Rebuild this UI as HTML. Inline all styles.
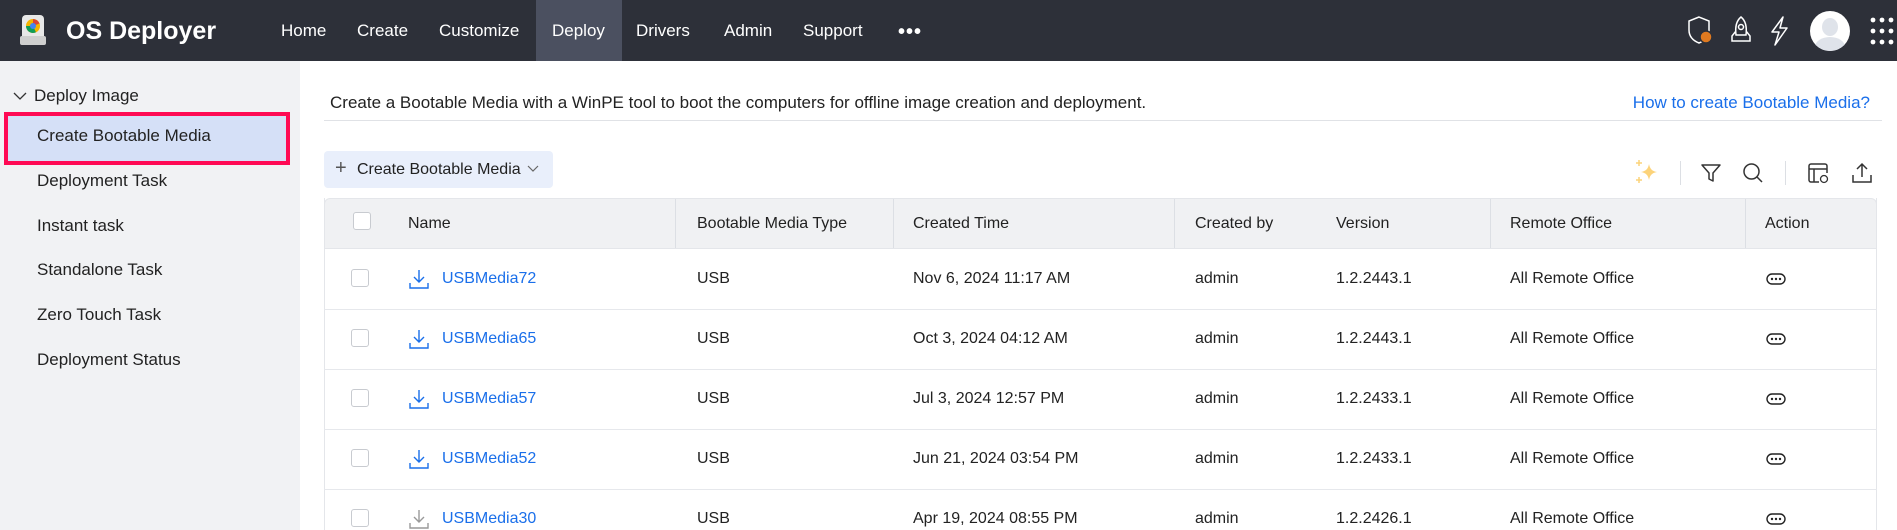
<!DOCTYPE html>
<html><head><meta charset="utf-8"><style>
*{margin:0;padding:0;box-sizing:border-box}
body{width:1897px;height:530px;overflow:hidden;background:#fff;font-family:"Liberation Sans",sans-serif;color:#222;position:relative}
.a{position:absolute;white-space:nowrap}
.nav{position:absolute;left:0;top:0;width:1897px;height:61px;background:#2d3039}
.ni{position:absolute;top:0;height:61px;line-height:61px;color:#fff;font-size:17px}
.side{position:absolute;left:0;top:61px;width:300px;height:469px;background:#f1f2f4}
.si{position:absolute;left:37px;font-size:17px;color:#222;transform:translateY(-50%)}
.hdr{position:absolute;left:324px;top:198px;width:1553px;height:51px;background:#f0f1f3;border:1px solid #e4e6ea;border-radius:6px 6px 0 0}
.c{position:absolute;font-size:16px;transform:translateY(-50%);white-space:nowrap}
.cb{position:absolute;width:18px;height:18px;border:1.5px solid #c8cbd0;border-radius:3px;background:#fff}
.row{position:absolute;left:324px;width:1553px;height:1px;background:#e6e8ec}
.dv{position:absolute;top:199px;width:1px;height:49px;background:#dcdfe4}
a{color:#1a6fea;text-decoration:none}
</style></head><body>
<div class="nav"></div>
<svg class="a" style="left:19px;top:14px" width="28" height="32" viewBox="0 0 28 32"><rect x="3" y="1" width="22" height="26" rx="4" fill="#e8e8e8"/><rect x="1" y="22" width="26" height="9" rx="2" fill="#cfcfcf"/><circle cx="14" cy="12" r="7" fill="#f4b400"/><path d="M14 5a7 7 0 0 1 6.5 4.5L14 12z" fill="#db4437"/><path d="M7 12a7 7 0 0 0 10 6.3L14 12z" fill="#0f9d58"/><circle cx="14" cy="12" r="3" fill="#4285f4"/></svg>
<div class="a" style="left:66px;top:17px;font-size:25px;font-weight:bold;color:#fff">OS Deployer</div>
<div class="ni" style="left:281px">Home</div>
<div class="ni" style="left:357px">Create</div>
<div class="ni" style="left:439px">Customize</div>
<div class="a" style="left:536px;top:0;width:86px;height:61px;background:#4b5060"></div>
<div class="ni" style="left:552px">Deploy</div>
<div class="ni" style="left:636px">Drivers</div>
<div class="ni" style="left:724px">Admin</div>
<div class="ni" style="left:803px">Support</div>
<div class="ni" style="left:898px;top:2px;font-size:20px;letter-spacing:1px;font-weight:bold">•••</div>
<svg class="a" style="left:1685px;top:15px" width="32" height="32" viewBox="0 0 32 32"><path d="M14 2L4 6v9c0 7 5 11 10 13 5-2 10-6 10-13V6z" fill="none" stroke="#fff" stroke-width="1.5"/><circle cx="21" cy="22" r="6" fill="#e07a20" stroke="#2d3039" stroke-width="1.5"/></svg>
<svg class="a" style="left:1728px;top:15px" width="26" height="32" viewBox="0 0 26 32"><path d="M13 2c5 4 6 10 5 18H8C7 12 8 6 13 2z" fill="none" stroke="#fff" stroke-width="1.5"/><circle cx="13" cy="12" r="2.5" fill="none" stroke="#fff" stroke-width="1.5"/><path d="M8 16l-4 5v5h4M18 16l4 5v5h-4M8 26h10" fill="none" stroke="#fff" stroke-width="1.5"/></svg>
<svg class="a" style="left:1768px;top:16px" width="22" height="30" viewBox="0 0 22 30"><path d="M15 1L4 16h7l-4 13 12-17h-7z" fill="none" stroke="#fff" stroke-width="1.5" stroke-linejoin="round"/></svg>
<div class="a" style="left:1810px;top:11px;width:40px;height:40px;border-radius:50%;background:#fff;overflow:hidden"><div class="a" style="left:12px;top:7px;width:16px;height:18px;border-radius:50%;background:#dfe3ea"></div><div class="a" style="left:5px;top:26px;width:30px;height:20px;border-radius:50%;background:#dfe3ea"></div></div>
<svg class="a" style="left:1869px;top:16px" width="28" height="30" viewBox="0 0 28 30"><g fill="#fff"><circle cx="4" cy="4" r="2.4"/><circle cx="13" cy="4" r="2.4"/><circle cx="22" cy="4" r="2.4"/><circle cx="4" cy="15" r="2.4"/><circle cx="13" cy="15" r="2.4"/><circle cx="22" cy="15" r="2.4"/><circle cx="4" cy="26" r="2.4"/><circle cx="13" cy="26" r="2.4"/><circle cx="22" cy="26" r="2.4"/></g></svg>

<div class="side"></div>
<svg class="a" style="left:13px;top:91px" width="14" height="10" viewBox="0 0 14 10"><path d="M1 2l6 6 6-6" fill="none" stroke="#333" stroke-width="1.3"/></svg>
<div class="a" style="left:34px;top:86px;font-size:17px">Deploy Image</div>
<div class="a" style="left:4px;top:112px;width:286px;height:53px;border:4px solid #ff0a54;background:#d5e0f7"></div>
<div class="si" style="top:136px">Create Bootable Media</div>
<div class="si" style="top:181px">Deployment Task</div>
<div class="si" style="top:226px">Instant task</div>
<div class="si" style="top:270px">Standalone Task</div>
<div class="si" style="top:315px">Zero Touch Task</div>
<div class="si" style="top:360px">Deployment Status</div>

<div class="a" style="left:330px;top:93px;font-size:17px">Create a Bootable Media with a WinPE tool to boot the computers for offline image creation and deployment.</div>
<div class="a" style="right:27px;top:93px;font-size:17px;color:#1a6fea">How to create Bootable Media?</div>
<div class="a" style="left:324px;top:120px;width:1558px;height:1px;background:#e0e2e6"></div>

<div class="a" style="left:324px;top:151px;width:229px;height:37px;background:#e9effb;border-radius:4px"></div>
<div class="a" style="left:335px;top:157px;font-size:20px;color:#555">+</div>
<div class="a" style="left:357px;top:161px;font-size:16px">Create Bootable Media</div>
<svg class="a" style="left:527px;top:165px" width="12" height="8" viewBox="0 0 12 8"><path d="M1 1l5 5 5-5" fill="none" stroke="#666" stroke-width="1.2"/></svg>

<svg class="a" style="left:1635px;top:159px" width="26" height="26" viewBox="0 0 26 26"><path d="M14 5c1 5 3 7 8 8-5 1-7 3-8 8-1-5-3-7-8-8 5-1 7-3 8-8z" fill="#fcd37a"/><path d="M4 1v6M1 4h6M4 18v6M1 21h6" stroke="#fcd37a" stroke-width="1.5"/></svg>
<div class="a" style="left:1680px;top:161px;width:1px;height:24px;background:#dcdfe4"></div>
<svg class="a" style="left:1700px;top:162px" width="22" height="22" viewBox="0 0 22 22"><path d="M2 3h18l-7 8v8l-4-2v-6z" fill="none" stroke="#333" stroke-width="1.5" stroke-linejoin="round"/></svg>
<svg class="a" style="left:1742px;top:162px" width="22" height="22" viewBox="0 0 22 22"><circle cx="9.5" cy="9.5" r="7.5" fill="none" stroke="#333" stroke-width="1.5"/><path d="M15 15l5 5" stroke="#333" stroke-width="1.5"/></svg>
<div class="a" style="left:1785px;top:161px;width:1px;height:24px;background:#dcdfe4"></div>
<svg class="a" style="left:1807px;top:162px" width="24" height="24" viewBox="0 0 24 24"><path d="M12 20H4a2 2 0 0 1-2-2V4a2 2 0 0 1 2-2h14a2 2 0 0 1 2 2v7M2 7h18M7 7v13" fill="none" stroke="#333" stroke-width="1.5"/><circle cx="17" cy="17" r="3.5" fill="none" stroke="#333" stroke-width="1.3"/></svg>
<svg class="a" style="left:1850px;top:161px" width="24" height="24" viewBox="0 0 24 24"><path d="M12 16V3M7 8l5-5 5 5M3 14v7h18v-7" fill="none" stroke="#333" stroke-width="1.5"/></svg>

<div class="hdr"></div>
<div class="a" style="left:324px;top:198px;width:1px;height:332px;background:#e4e6ea"></div>
<div class="a" style="left:1876px;top:198px;width:1px;height:332px;background:#e4e6ea"></div>
<div class="dv" style="left:675px"></div><div class="dv" style="left:893px"></div><div class="dv" style="left:1174px"></div><div class="dv" style="left:1490px"></div><div class="dv" style="left:1745px"></div>
<div class="cb" style="left:353px;top:212px"></div>
<div class="c" style="left:408px;top:224px">Name</div>
<div class="c" style="left:697px;top:224px">Bootable Media Type</div>
<div class="c" style="left:913px;top:224px">Created Time</div>
<div class="c" style="left:1195px;top:224px">Created by</div>
<div class="c" style="left:1336px;top:224px">Version</div>
<div class="c" style="left:1510px;top:224px">Remote Office</div>
<div class="c" style="left:1765px;top:224px">Action</div>

<div class="row" style="top:309px"></div><div class="row" style="top:369px"></div><div class="row" style="top:429px"></div><div class="row" style="top:489px"></div>

<div class="cb" style="left:351px;top:269px"></div><div class="cb" style="left:351px;top:329px"></div><div class="cb" style="left:351px;top:389px"></div><div class="cb" style="left:351px;top:449px"></div><div class="cb" style="left:351px;top:509px"></div>

<svg class="a" style="left:408px;top:268px" width="22" height="22" viewBox="0 0 22 22"><path d="M11 2v12M6 9l5 5 5-5M2 15v5h18v-5" fill="none" stroke="#1a6fea" stroke-width="1.4"/></svg>
<svg class="a" style="left:408px;top:328px" width="22" height="22" viewBox="0 0 22 22"><path d="M11 2v12M6 9l5 5 5-5M2 15v5h18v-5" fill="none" stroke="#1a6fea" stroke-width="1.4"/></svg>
<svg class="a" style="left:408px;top:388px" width="22" height="22" viewBox="0 0 22 22"><path d="M11 2v12M6 9l5 5 5-5M2 15v5h18v-5" fill="none" stroke="#1a6fea" stroke-width="1.4"/></svg>
<svg class="a" style="left:408px;top:448px" width="22" height="22" viewBox="0 0 22 22"><path d="M11 2v12M6 9l5 5 5-5M2 15v5h18v-5" fill="none" stroke="#1a6fea" stroke-width="1.4"/></svg>
<svg class="a" style="left:408px;top:508px" width="22" height="22" viewBox="0 0 22 22"><path d="M11 2v12M6 9l5 5 5-5M2 15v5h18v-5" fill="none" stroke="#999" stroke-width="1.4"/></svg>

<div class="c" style="left:442px;top:279px"><a>USBMedia72</a></div>
<div class="c" style="left:442px;top:339px"><a>USBMedia65</a></div>
<div class="c" style="left:442px;top:399px"><a>USBMedia57</a></div>
<div class="c" style="left:442px;top:459px"><a>USBMedia52</a></div>
<div class="c" style="left:442px;top:519px"><a>USBMedia30</a></div>

<div class="c" style="left:697px;top:279px">USB</div><div class="c" style="left:697px;top:339px">USB</div><div class="c" style="left:697px;top:399px">USB</div><div class="c" style="left:697px;top:459px">USB</div><div class="c" style="left:697px;top:519px">USB</div>

<div class="c" style="left:913px;top:279px">Nov 6, 2024 11:17 AM</div>
<div class="c" style="left:913px;top:339px">Oct 3, 2024 04:12 AM</div>
<div class="c" style="left:913px;top:399px">Jul 3, 2024 12:57 PM</div>
<div class="c" style="left:913px;top:459px">Jun 21, 2024 03:54 PM</div>
<div class="c" style="left:913px;top:519px">Apr 19, 2024 08:55 PM</div>

<div class="c" style="left:1195px;top:279px">admin</div><div class="c" style="left:1195px;top:339px">admin</div><div class="c" style="left:1195px;top:399px">admin</div><div class="c" style="left:1195px;top:459px">admin</div><div class="c" style="left:1195px;top:519px">admin</div>

<div class="c" style="left:1336px;top:279px">1.2.2443.1</div>
<div class="c" style="left:1336px;top:339px">1.2.2443.1</div>
<div class="c" style="left:1336px;top:399px">1.2.2433.1</div>
<div class="c" style="left:1336px;top:459px">1.2.2433.1</div>
<div class="c" style="left:1336px;top:519px">1.2.2426.1</div>

<div class="c" style="left:1510px;top:279px">All Remote Office</div><div class="c" style="left:1510px;top:339px">All Remote Office</div><div class="c" style="left:1510px;top:399px">All Remote Office</div><div class="c" style="left:1510px;top:459px">All Remote Office</div><div class="c" style="left:1510px;top:519px">All Remote Office</div>

<svg class="a" style="left:1766px;top:273px" width="20" height="12" viewBox="0 0 20 12"><rect x="1" y="1" width="18" height="10" rx="5" fill="none" stroke="#222" stroke-width="1.4"/><circle cx="6" cy="6" r="1.2" fill="#222"/><circle cx="10" cy="6" r="1.2" fill="#222"/><circle cx="14" cy="6" r="1.2" fill="#222"/></svg>
<svg class="a" style="left:1766px;top:333px" width="20" height="12" viewBox="0 0 20 12"><rect x="1" y="1" width="18" height="10" rx="5" fill="none" stroke="#222" stroke-width="1.4"/><circle cx="6" cy="6" r="1.2" fill="#222"/><circle cx="10" cy="6" r="1.2" fill="#222"/><circle cx="14" cy="6" r="1.2" fill="#222"/></svg>
<svg class="a" style="left:1766px;top:393px" width="20" height="12" viewBox="0 0 20 12"><rect x="1" y="1" width="18" height="10" rx="5" fill="none" stroke="#222" stroke-width="1.4"/><circle cx="6" cy="6" r="1.2" fill="#222"/><circle cx="10" cy="6" r="1.2" fill="#222"/><circle cx="14" cy="6" r="1.2" fill="#222"/></svg>
<svg class="a" style="left:1766px;top:453px" width="20" height="12" viewBox="0 0 20 12"><rect x="1" y="1" width="18" height="10" rx="5" fill="none" stroke="#222" stroke-width="1.4"/><circle cx="6" cy="6" r="1.2" fill="#222"/><circle cx="10" cy="6" r="1.2" fill="#222"/><circle cx="14" cy="6" r="1.2" fill="#222"/></svg>
<svg class="a" style="left:1766px;top:513px" width="20" height="12" viewBox="0 0 20 12"><rect x="1" y="1" width="18" height="10" rx="5" fill="none" stroke="#222" stroke-width="1.4"/><circle cx="6" cy="6" r="1.2" fill="#222"/><circle cx="10" cy="6" r="1.2" fill="#222"/><circle cx="14" cy="6" r="1.2" fill="#222"/></svg>
</body></html>
